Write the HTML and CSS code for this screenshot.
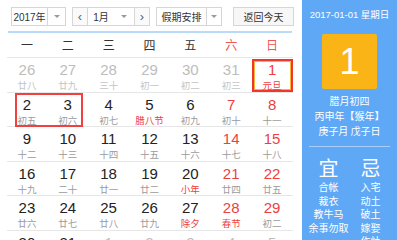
FILE: index.html
```html
<!DOCTYPE html>
<html lang="zh-CN">
<head>
<meta charset="utf-8">
<title>万年历</title>
<link rel="stylesheet" href="styles.css">
</head>
<body>
<div class="app">
  <div class="cal">
    <div class="toolbar">
      <div class="select year"><span class="val">2017年</span><span class="caret-box"><i class="caret"></i></span></div>
      <div class="month-group">
        <span class="nav">&lsaquo;</span>
        <div class="select month"><span class="val">1月</span><span class="caret-plain"><i class="caret"></i></span></div>
        <span class="nav">&rsaquo;</span>
      </div>
      <div class="select holiday"><span class="val">假期安排</span><span class="caret-box"><i class="caret"></i></span></div>
      <span class="today-btn">返回今天</span>
    </div>
    <div class="bar"></div>
    <div class="weekdays">
      <span>一</span><span>二</span><span>三</span><span>四</span><span>五</span><span class="we">六</span><span class="we">日</span>
    </div>
    <div class="rows">
      <div class="row">
        <div class="cell other"><b>26</b><em>廿八</em></div>
        <div class="cell other"><b>27</b><em>廿九</em></div>
        <div class="cell other"><b>28</b><em>三十</em></div>
        <div class="cell other"><b>29</b><em>初一</em></div>
        <div class="cell other"><b>30</b><em>初二</em></div>
        <div class="cell other"><b>31</b><em>初三</em></div>
        <div class="cell wk today"><b>1</b><em class="fest">元旦</em></div>
      </div>
      <div class="row">
        <span class="range"></span>
        <div class="cell"><b>2</b><em>初五</em></div>
        <div class="cell"><b>3</b><em>初六</em></div>
        <div class="cell"><b>4</b><em>初七</em></div>
        <div class="cell"><b>5</b><em class="fest">腊八节</em></div>
        <div class="cell"><b>6</b><em>初九</em></div>
        <div class="cell wk"><b>7</b><em>初十</em></div>
        <div class="cell wk"><b>8</b><em>十一</em></div>
      </div>
      <div class="row">
        <div class="cell"><b>9</b><em>十二</em></div>
        <div class="cell"><b>10</b><em>十三</em></div>
        <div class="cell"><b>11</b><em>十四</em></div>
        <div class="cell"><b>12</b><em>十五</em></div>
        <div class="cell"><b>13</b><em>十六</em></div>
        <div class="cell wk"><b>14</b><em>十七</em></div>
        <div class="cell wk"><b>15</b><em>十八</em></div>
      </div>
      <div class="row">
        <div class="cell"><b>16</b><em>十九</em></div>
        <div class="cell"><b>17</b><em>二十</em></div>
        <div class="cell"><b>18</b><em>廿一</em></div>
        <div class="cell"><b>19</b><em>廿二</em></div>
        <div class="cell"><b>20</b><em class="fest">小年</em></div>
        <div class="cell wk"><b>21</b><em>廿四</em></div>
        <div class="cell wk"><b>22</b><em>廿五</em></div>
      </div>
      <div class="row">
        <div class="cell"><b>23</b><em>廿六</em></div>
        <div class="cell"><b>24</b><em>廿七</em></div>
        <div class="cell"><b>25</b><em>廿八</em></div>
        <div class="cell"><b>26</b><em>廿九</em></div>
        <div class="cell"><b>27</b><em class="fest">除夕</em></div>
        <div class="cell wk"><b>28</b><em class="fest">春节</em></div>
        <div class="cell wk"><b>29</b><em>初二</em></div>
      </div>
      <div class="row">
        <div class="cell"><b>30</b><em>初三</em></div>
        <div class="cell"><b>31</b><em>初四</em></div>
        <div class="cell other"><b>1</b><em>初五</em></div>
        <div class="cell other"><b>2</b><em>初六</em></div>
        <div class="cell other"><b>3</b><em>初七</em></div>
        <div class="cell other"><b>4</b><em>立春</em></div>
        <div class="cell other"><b>5</b><em>初九</em></div>
      </div>
    </div>
  </div>
  <aside class="panel">
    <div class="p-date">2017-01-01 星期日</div>
    <div class="p-day">1</div>
    <div class="p-lunar">
      <div class="ln">腊月初四</div>
      <div class="ln">丙申年【猴年】</div>
      <div class="ln">庚子月 戊子日</div>
    </div>
    <div class="p-rule"></div>
    <div class="p-yiji">
      <div class="col">
        <div class="head">宜</div>
        <div class="it">合帐</div><div class="it">裁衣</div><div class="it">教牛马</div><div class="it">余事勿取</div>
      </div>
      <div class="col">
        <div class="head">忌</div>
        <div class="it">入宅</div><div class="it">动土</div><div class="it">破土</div><div class="it">嫁娶</div><div class="it">作灶</div>
      </div>
    </div>
  </aside>
</div>
</body>
</html>
```

FILE: styles.css
```css
* { box-sizing: border-box; }
html, body { margin: 0; padding: 0; background: #fff; }
body {
  font-family: "Liberation Sans", Arial, "Noto Sans CJK SC", sans-serif;
  color: #333;
  overflow: hidden;
}
.app {
  display: flex;
  width: 397px;
  height: 240px;
  overflow: hidden;
}
.cal {
  width: 302px;
  flex: none;
}
.toolbar {
  display: flex;
  align-items: center;
  height: 19px;
  margin-top: 7px;
  padding-left: 11px;
  font-size: 10px;
  color: #333;
}
.select {
  display: flex;
  height: 19px;
  border: 1px solid #d6d6d6;
  background: #fff;
  align-items: stretch;
}
.select .val {
  flex: 1;
  display: flex;
  align-items: center;
  justify-content: center;
}
.caret-box, .caret-plain {
  display: flex;
  align-items: center;
  justify-content: center;
  width: 15px;
}
.caret-box { border-left: 1px solid #d6d6d6; }
.caret {
  width: 0; height: 0;
  border-left: 3px solid transparent;
  border-right: 3px solid transparent;
  border-top: 3px solid #9a9a9a;
}
.year { width: 55px; }
.year .caret-box { width: 18px; }
.month-group {
  display: flex;
  margin-left: 6px;
  height: 19px;
}
.nav {
  width: 16px;
  height: 19px;
  border: 1px solid #d6d6d6;
  background: #fafafa;
  display: flex;
  align-items: center;
  justify-content: center;
  font-size: 13px;
  color: #666;
}
.month { width: 46px; border-left: none; border-right: none; }
.month .caret-plain { width: 20px; }
.holiday { width: 66px; margin-left: 6px; }
.today-btn {
  margin-left: 11px;
  width: 61px;
  height: 19px;
  border: 1px solid #d6d6d6;
  background: #f7f7f7;
  display: flex;
  align-items: center;
  justify-content: center;
}
.bar {
  height: 2px;
  margin: 5px 10px 0 8px;
  background: #b9daf8;
}
.weekdays {
  display: grid;
  grid-template-columns: repeat(7, 1fr);
  width: 286px;
  margin-left: 6.5px;
  height: 25px;
  align-items: center;
  font-size: 12px;
  color: #333;
  border-bottom: 1px solid #e6e6e6;
  font-family: "Noto Sans CJK SC", sans-serif;
}
.weekdays span { text-align: center; line-height: 24px; }
.weekdays .we { color: #f15555; }
.rows {
  width: 286px;
  margin-left: 6.5px;
}
.row {
  position: relative;
  display: grid;
  grid-template-columns: repeat(7, 1fr);
  height: 34.5px;
  border-bottom: 1px solid #e6e6e6;
}
.cell {
  display: flex;
  flex-direction: column;
  align-items: center;
  padding-top: 4px;
}
.cell b {
  font-weight: normal;
  font-size: 15px;
  line-height: 16px;
  color: #222;
}
.cell em {
  font-style: normal;
  font-size: 9.5px;
  line-height: 12px;
  margin-top: 1px;
  color: #9b9b9b;
  font-family: "Noto Sans CJK SC", sans-serif;
}
.cell.wk b { color: #ee3f3f; }
.cell em.fest { color: #ee3f3f; }
.cell.other b { color: #bdbdbd; }
.cell.other em { color: #c4c4c4; }
.cell.today {
  box-shadow: inset 0 0 0 2px #f2362b, inset 0 0 0 3px #fbb43a;
  margin-top: 1px;
  padding-top: 3px;
}
.range {
  position: absolute;
  left: 8.5px;
  top: 0;
  width: 68px;
  height: 34px;
  border: 2px solid #f04040;
  pointer-events: none;
}
.panel {
  flex: 1;
  background: #5fa8f6;
  color: #fff;
  display: flex;
  flex-direction: column;
  align-items: center;
  font-family: "Noto Sans CJK SC", sans-serif;
}
.p-date {
  margin-top: 9px;
  height: 12px;
  font-size: 9.5px;
  line-height: 12px;
  font-family: "Liberation Sans", "Noto Sans CJK SC", sans-serif;
}
.p-day {
  margin-top: 13px;
  width: 55px;
  height: 55px;
  flex: none;
  border-radius: 2px;
  background: #fbb416;
  display: flex;
  align-items: center;
  justify-content: center;
  font-size: 36px;
  font-family: "Liberation Sans", sans-serif;
  font-weight: normal;
  color: #fff;
}
.p-lunar {
  margin-top: 3.5px;
  font-size: 10px;
  text-align: center;
  display: flex;
  flex-direction: column;
  align-items: center;
}
.p-lunar .ln {
  height: 15px;
  line-height: 15px;
  white-space: nowrap;
}
.p-rule {
  width: 81px;
  height: 1px;
  flex: none;
  margin-top: 8.5px;
  background: rgba(255,255,255,0.45);
}
.p-yiji {
  display: grid;
  grid-template-columns: 42px 42px;
  margin-top: 9px;
  font-size: 10px;
  text-align: center;
}
.p-yiji .col { display: flex; flex-direction: column; align-items: center; white-space: nowrap; }
.p-yiji .head {
  font-size: 20px;
  height: 24px;
  line-height: 24px;
}
.p-yiji .it {
  height: 13.5px;
  line-height: 13.5px;
}
```
